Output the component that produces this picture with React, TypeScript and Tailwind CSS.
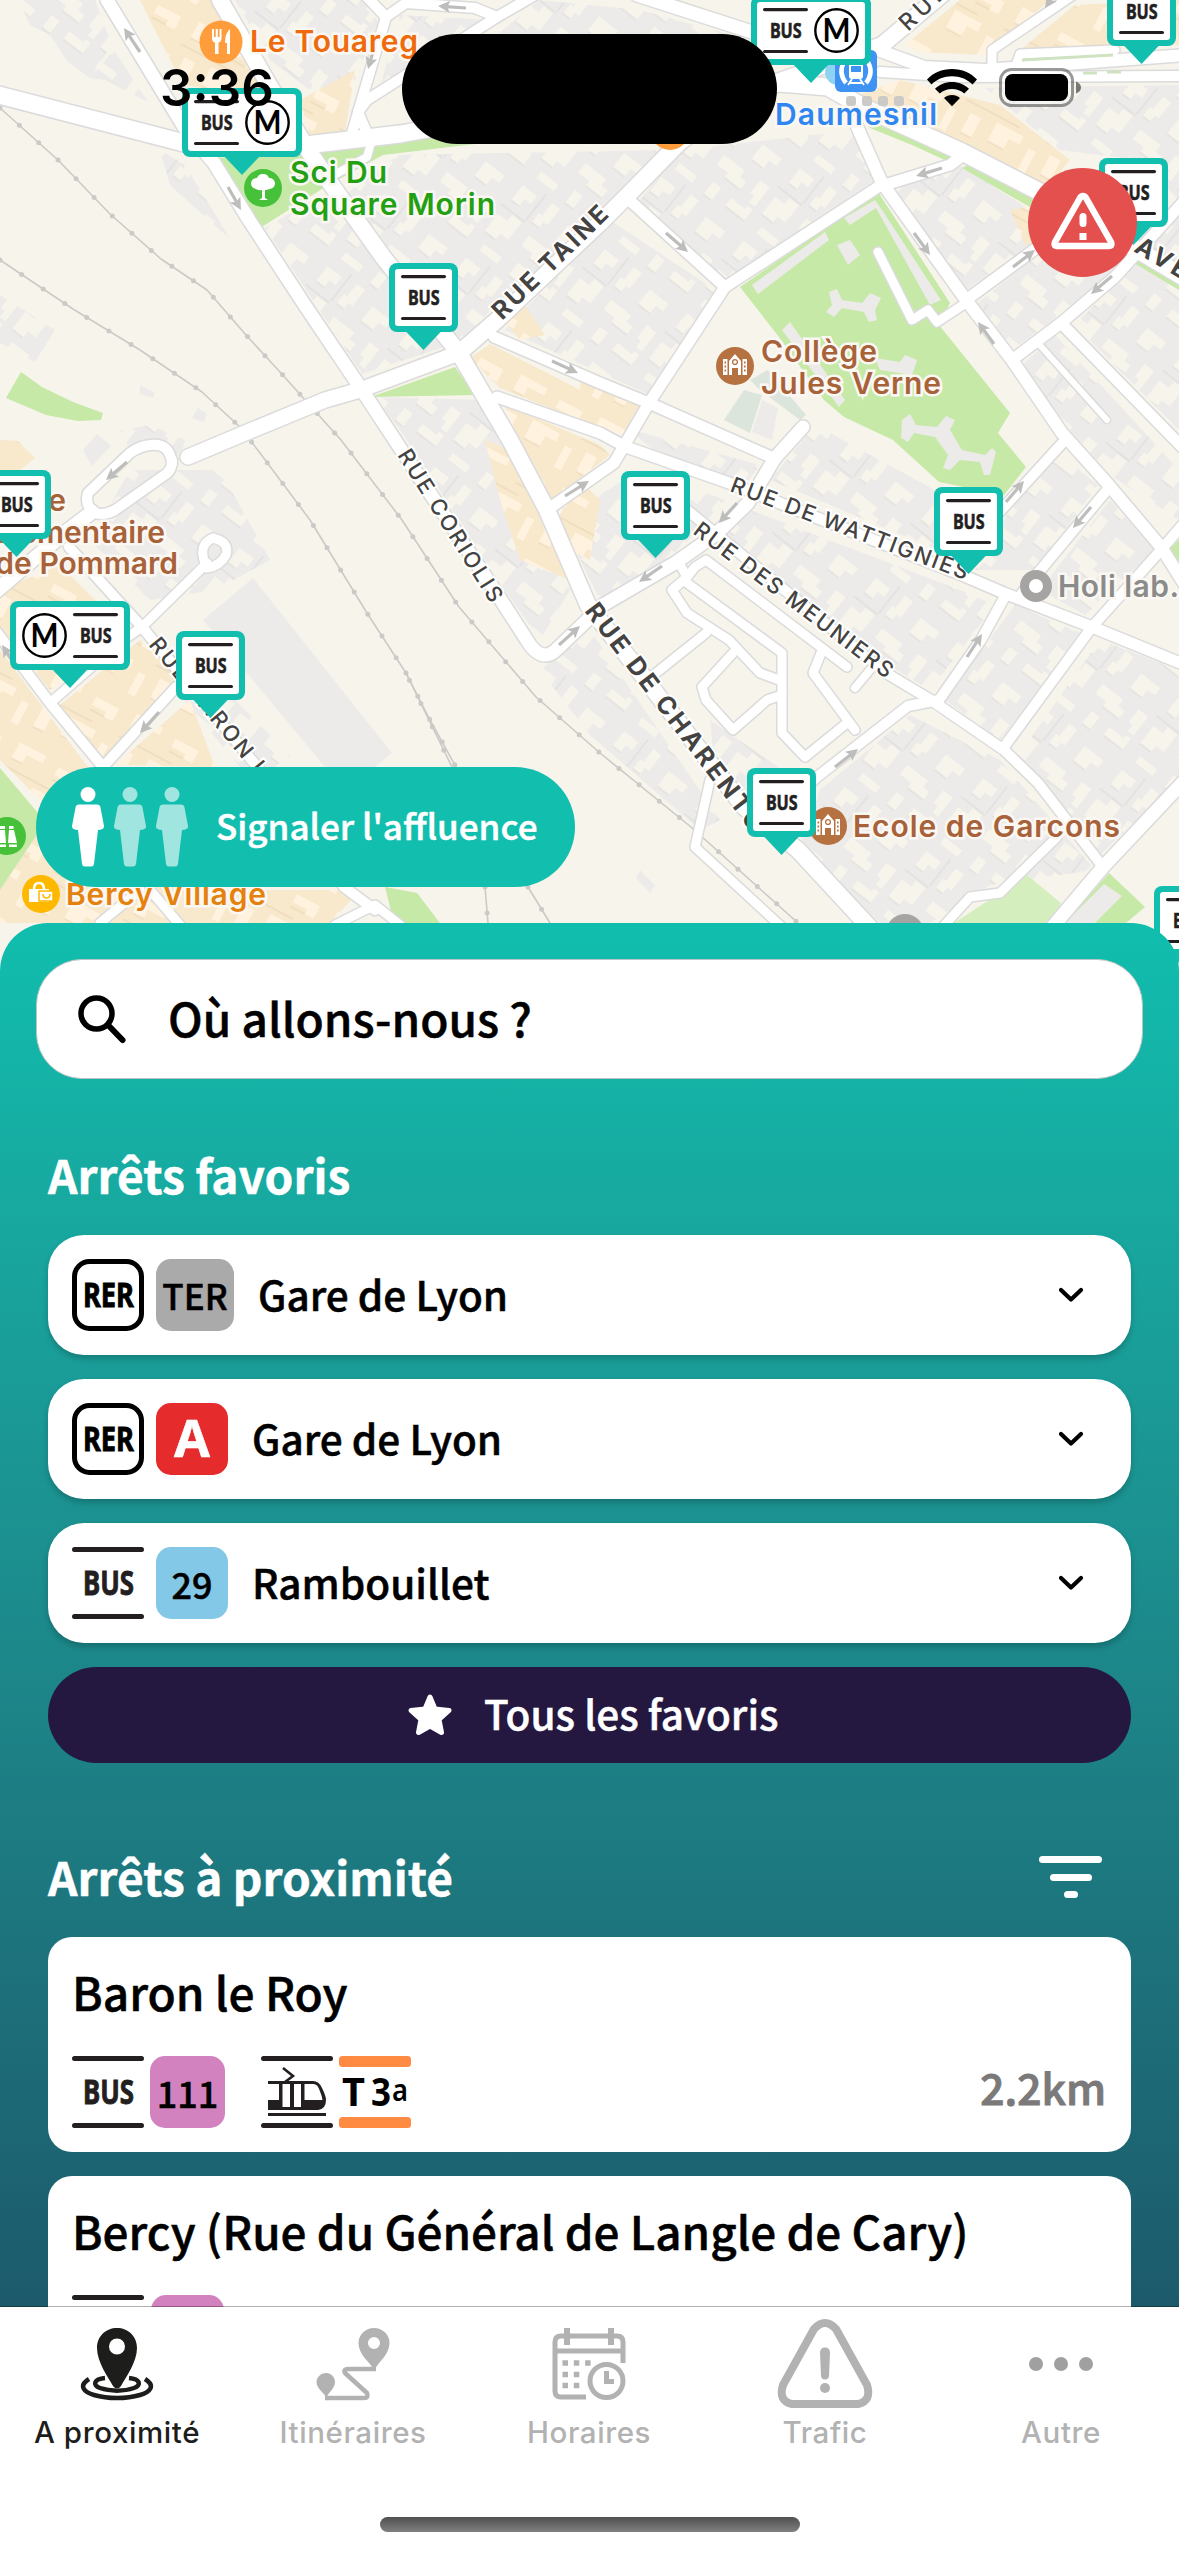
import React from "react";

const CJK = "font-['Noto_Sans_CJK_JP','Noto_Sans_CJK_SC',sans-serif] [-webkit-text-stroke:0.5px]";

/* ---------- Map ---------- */

const GREENS = [
  "740,287 878,192 950,303 939,325 1010,413 998,433 1026,467 1004,495 939,482 893,440 844,417 824,400 779,337",
  "218,158 306,150 440,137 475,144 383,155 325,187 260,228",
  "371,397 455,367 475,395",
  "21,372 42,387 73,402 103,413 101,420 78,421 46,415 6,398",
  "863,120 905,130 958,153 947,161 912,145 870,128",
  "962,168 977,160 1035,190 1035,210",
  "1134,263 1141,253 1179,273 1179,290",
  "1109,873 1145,907 1126,923 1065,923",
  "1179,540 1168,550 1179,572",
  "0,768 38,813 40,830 0,890",
  "385,887 417,893 440,923 394,923",
];

const BLOCKS = [
  "18,0 95,0 112,45 90,78 68,62 50,35 30,25",
  "90,78 114,50 148,102 120,88 105,80",
  "235,0 365,0 378,22 355,80 310,90 270,60",
  "400,15 490,20 378,95",
  "398,155 660,150 600,215 490,310 465,345 345,195",
  "265,228 330,190 450,345 362,374",
  "640,200 680,150 855,130 875,180 725,280",
  "610,220 715,290 650,395 505,330",
  "895,190 960,165 1030,210 1040,240 965,290",
  "975,305 1050,245 1115,270 1060,315 1012,350",
  "1075,325 1179,215 1179,430",
  "1022,365 1055,335 1179,470 1179,520 1110,475 1070,430",
  "375,397 485,400 540,510 570,590 540,640 505,590 400,430",
  "560,520 640,470 725,500 675,555 600,600",
  "632,430 760,465 745,485 650,450",
  "780,468 815,425 935,490 950,555 770,480",
  "750,510 960,590 995,605 930,690 880,660 720,540",
  "1010,510 1060,455 1098,485 1035,570 975,570",
  "1110,500 1155,550 1085,615 1040,590",
  "1015,605 1085,635 1000,740 945,700",
  "1100,640 1179,670 1179,780 1100,855 1015,760",
  "820,790 910,715 1000,760 1095,870 990,885 930,923 880,923 800,845",
  "540,670 590,630 720,820 700,830 590,735",
  "710,720 790,775 750,800 715,770",
  "130,470 220,470 270,560 215,590 150,600 90,540",
  "0,295 55,330 35,362 0,343",
  "540,0 640,10 750,40 750,80 600,80 420,100 505,28",
  "985,88 1179,85 1179,200 1140,160 1060,150",
  "160,150 185,165 240,255 225,235 170,185",
  "120,430 150,425 185,440 180,460 130,450",
  "176,690 200,665 290,755 275,767 240,767",
];

const SOLID = [
  "253,578 392,753 375,767 325,767 203,620",
  "83,450 97,434 111,446 92,466",
  "198,408 207,414 204,422 192,418",
  "140,385 155,393 153,398 140,394",
  "640,870 655,885 650,893 636,878",
];

const SHOPS = [
  "140,0 215,0 265,90 240,95 185,85 170,60",
  "300,100 355,70 345,132 310,137",
  "470,358 490,344 600,400 640,418 615,434 500,388",
  "505,405 600,445 610,455 552,500 520,445",
  "500,315 525,305 545,335 520,340",
  "905,45 960,0 1050,0 985,55 920,52",
  "1075,5 1179,0 1179,45 1020,50",
  "860,95 900,80 1000,105 1070,160 1045,190 960,145",
  "1010,210 1035,205 1045,240 1025,245",
  "485,440 510,450 545,530 570,580 520,560 500,500",
  "580,480 600,500 590,560 560,545 560,515",
  "0,590 60,565 130,635 50,690 0,630",
  "60,705 140,640 180,680 105,760",
  "0,650 90,770 50,810 0,760",
  "115,765 190,700 215,767",
  "40,830 60,820 200,890 360,890 330,923 0,923 0,890",
  "0,440 18,441 35,458 20,470 0,470",
  "580,370 640,405 625,435 580,415",
];

const PARK_BUILDINGS = [
  "844,218 875,200 882,210 941,300 930,305 876,208 850,225",
  "752,285 825,232 829,240 758,294",
  "837,245 850,240 860,255 848,265",
  "829,292 837,289 842,300 862,303 870,293 881,298 875,310 877,320 869,322 864,312 842,308 834,317 826,312 832,305",
  "782,330 790,322 845,400 839,407",
  "875,358 900,362 905,355 917,360 912,375 880,370",
  "902,420 910,414 916,425 937,427 946,416 955,420 950,430 962,450 985,455 992,448 996,452 990,475 984,475 980,462 960,460 950,470 943,468 948,455 935,437 914,433 908,442 901,438",
];

const ROADS: [string, number][] = [
  ["M107,0 L184,127 L214,163 L249,220 L306,307 L360,387 L406,457 L501,600 L530,645 Q543,662 556,650 L603,605 L675,563 L715,535 L748,503 L775,458 L803,427", 13],
  ["M-5,94 L184,143 L306,145 L400,134 L560,105 L780,83 L828,87 L865,108 L962,152 L1040,192 L1185,278", 17],
  ["M220,0 L268,83 L306,147 L333,187 L383,257 L459,353 L510,440 L547,510 L588,605 L744,807 L798,850 L872,930", 16],
  ["M459,353 L497,320 L600,223 L626,197 L679,143 L740,95 L882,45 L945,-8", 16],
  ["M855,122 L882,183 L966,300 L1012,360 L1062,433 L1107,483 L1161,547 L1185,585", 12],
  ["M188,457 L245,433 L325,400 L360,390 L459,353", 15],
  ["M172,464 Q170,442 150,445 Q140,446 130,453 L88,493 Q84,505 95,513 Q104,516 115,510 L166,474 Q172,470 172,460", 10],
  ["M92,512 L62,535 L-5,592", 14],
  ["M69,547 L142,627 L264,775 L344,887 L375,910", 10],
  ["M50,703 L119,643 L142,627 L207,563 M207,568 Q196,545 213,538 Q230,542 226,555 Q220,566 207,568", 9],
  ["M-5,630 L50,703 L103,767 L176,687", 10],
  ["M497,397 L600,433 L626,447 L729,483 L962,575 L1004,593 L1092,627 L1185,665", 11],
  ["M494,337 L600,383 L649,403 L771,457", 11],
  ["M626,197 L725,287 L649,403 L614,463 L547,510", 11],
  ["M725,287 L878,187 L950,165 L966,153", 11],
  ["M966,300 L1038,247 L1060,225", 11],
  ["M1012,360 L1061,323 L1115,277 L1185,200", 11],
  ["M1061,323 L1185,450", 11],
  ["M1038,343 L1107,420", 6],
  ["M878,252 L912,320 L928,310 L937,322 L966,303", 9],
  ["M1065,440 L1004,507 L950,565", 10],
  ["M1107,490 L1038,573 L1022,593", 10],
  ["M1185,522 L1161,550 L1092,627 L1004,747", 10],
  ["M1004,598 L981,640 L939,700 L908,706 L817,777 L760,830", 10],
  ["M687,510 L886,673 L931,700 L1004,750 L1038,783 L1103,867", 10],
  ["M1185,780 L1103,867 L1050,930", 13],
  ["M1057,837 L1000,893 L970,897 L940,930", 9],
  ["M679,563 L687,577 L672,590 L687,613 L729,640 L760,673 L779,680", 9],
  ["M706,633 L656,673", 9],
  ["M687,577 L695,567 L706,560 L847,667", 9],
  ["M687,583 L782,653 L782,733 L805,757 L847,723", 9],
  ["M821,653 L813,673 L855,730", 9],
  ["M733,653 L702,687 L706,700 L733,730 L767,700 L782,695", 9],
  ["M870,670 L855,688", 8],
  ["M710,780 L695,847 L785,930", 9],
  ["M637,-5 L752,32", 13],
  ["M878,50 L924,67 L985,70 L1185,55", 12],
  ["M880,72 L960,77 L1185,76", 10],
  ["M992,65 L992,50 L1073,-5", 9],
  ["M1015,68 L1020,54 L1115,50", 9],
  ["M365,-5 L386,17 L406,3 L475,8 L497,17 L535,-5", 10],
  ["M386,17 L352,133", 10],
  ["M497,17 L367,100 L358,112 L367,133", 10],
  ["M371,143 L367,157 L325,180", 8],
  ["M100,923 L140,890 M150,890 L180,925 M335,925 L375,905 M375,905 L400,925", 9],
];

const RAILS = [
  "M0,108 L58,160 L110,214 L161,259 L207,290 L246,335 L280,372 L341,440 L402,520 L459,607 L536,697 L600,753 L691,827 L798,923",
  "M0,260 L73,309 L140,350 L202,392 L240,427 L260,453 L310,520 L367,613 L406,673 L452,767",
  "M406,673 L430,720 L456,767",
  "M485,887 L488,923 M528,887 L550,923",
];

const ARROWS = [
  [140, 52, 124, 28], [466, 8, 438, 6], [375, 45, 368, 69], [228, 187, 241, 210], [552, 361, 578, 373],
  [666, 233, 688, 252], [942, 168, 916, 176], [914, 233, 930, 255], [1013, 267, 1035, 250], [1112, 276, 1091, 294],
  [994, 344, 978, 322], [1056, -8, 1045, 8], [127, 462, 106, 480], [565, 496, 589, 481], [559, 645, 580, 626],
  [159, 712, 140, 733], [12, 660, 2, 645], [737, 503, 719, 523], [662, 566, 639, 582], [1006, 502, 1024, 481],
  [1091, 507, 1073, 528], [967, 657, 982, 634], [835, 767, 858, 749],
];

function Street({ x1, y1, x2, y2, size, bold, children }: { x1: number; y1: number; x2: number; y2: number; size: number; bold?: boolean; children: string }) {
  const len = Math.hypot(x2 - x1, y2 - y1);
  const a = (Math.atan2(y2 - y1, x2 - x1) * 180) / Math.PI;
  return (
    <text
      transform={`translate(${x1} ${y1}) rotate(${a})`}
      fontSize={size}
      fontWeight={bold ? 700 : 500}
      fill="#444341"
      stroke="#fff"
      strokeWidth={4}
      paintOrder="stroke"
      textLength={len}
    >
      {children}
    </text>
  );
}

function Place({ x, y, color, w, end, children }: { x: number; y: number; color: string; w?: number; end?: boolean; children: string }) {
  return (
    <text x={x} y={y} fontSize={30} fontWeight={600} fill={color} stroke="#fbf8f3" strokeWidth={5} paintOrder="stroke" textLength={w} textAnchor={end ? "end" : "start"}>
      {children}
    </text>
  );
}

function BusGlyph({ x, y, s = 1 }: { x: number; y: number; s?: number }) {
  return (
    <g transform={`translate(${x} ${y}) scale(${s})`} fill="#231f20">
      <rect width="72" height="5" rx="2.5" />
      <rect y="67" width="72" height="5" rx="2.5" />
      <text x="11" y="48" fontFamily="Noto Sans" fontWeight="700" fontSize="34" stroke="#231f20" strokeWidth="0.9" textLength="51" lengthAdjust="spacingAndGlyphs">BUS</text>
    </g>
  );
}

function MetroGlyph({ cx, cy }: { cx: number; cy: number }) {
  return (
    <g>
      <circle cx={cx} cy={cy} r="21.2" fill="#fff" stroke="#000" strokeWidth="2.4" />
      <text x={cx - 14} y={cy + 11.5} fontFamily="Lato" fontWeight="700" fontSize="32" textLength="28" lengthAdjust="spacingAndGlyphs">M</text>
    </g>
  );
}

function Marker({ x, y, kind = "bus" }: { x: number; y: number; kind?: "bus" | "busMetro" | "metroBus" }) {
  const w = kind === "bus" ? 69 : 120;
  return (
    <g transform={`translate(${x} ${y})`}>
      <path d={`M${w / 2 - 19},67 H${w / 2 + 19} L${w / 2},87 Z`} fill="#12beae" />
      <rect width={w} height="69" rx="8" fill="#12beae" />
      <rect x="6" y="6" width={w - 12} height="57" rx="3" fill="#fff" />
      {kind === "bus" && <BusGlyph x={12} y={12} s={0.625} />}
      {kind === "busMetro" && (<><BusGlyph x={12} y={12} s={0.625} /><MetroGlyph cx={85.5} cy={34.5} /></>)}
      {kind === "metroBus" && (<><BusGlyph x={63} y={12} s={0.625} /><MetroGlyph cx={34.5} cy={34.5} /></>)}
    </g>
  );
}

function SchoolIcon({ x, y }: { x: number; y: number }) {
  return (
    <g transform={`translate(${x} ${y})`}>
      <circle r="19" fill="#b5713f" />
      <path d="M-12,-7 H-7.5 V9 H-12 Z M7.5,-7 H12 V9 H7.5 Z M-6,-5 L0,-12 L6,-5 V9 H3 V2 H-3 V9 H-6 Z" fill="#fff" />
      <path d="M-10.500,-3.500 h1.600 M-10.500,0.500 h1.600 M-10.500,4.500 h1.600 M9,-3.500 h1.600 M9,0.500 h1.600 M9,4.500 h1.600" stroke="#b5713f" strokeWidth="2" />
      <circle cy="-4" r="2.4" fill="none" stroke="#b5713f" strokeWidth="1.3" />
    </g>
  );
}

function CityMap() {
  return (
    <svg className="absolute top-0 left-0" width="1179" height="980" viewBox="0 0 1179 980" fontFamily="Inter, sans-serif">
      <defs>
        <pattern id="yards" width="104" height="92" patternUnits="userSpaceOnUse" patternTransform="rotate(38)">
          <rect width="104" height="92" fill="#ecebe9" />
          <path d="M6,8 h18 v10 h-8 v9 h-10z M40,4 h10 v20 h-5 v8 h-9 v-12 h4z M66,12 h24 v9 h-9 v10 h-15z M4,46 h12 v-8 h12 v22 h-10 v8 h-14z M42,44 h26 v8 h8 v10 h-20 v-6 h-14z M86,42 h12 v24 h-7 v-8 h-5z M12,78 h22 v8 h-22z M50,72 h10 v16 h-10z M74,74 h18 v-4 h6 v14 h-24z" fill="#f7f4ec" />
          <path d="M6,27 h10 M36,32 h9 M66,31 h15 M4,68 h14 M56,62 h20 M74,84 h24 M50,88 h10 M30,0 v34 M0,36 h30" stroke="#d9d8d6" strokeWidth="0.9" fill="none" />
        </pattern>
        <pattern id="shops" width="90" height="80" patternUnits="userSpaceOnUse" patternTransform="rotate(28)">
          <rect width="90" height="80" fill="#f8e8cc" />
          <path d="M6,6 h30 v8 h-18 v10 h-12z M52,10 h26 v14 h-10 v-5 h-16z M10,44 h12 v22 h-12z M38,40 h30 v9 h-12 v12 h-18z M78,48 h8 v24 h-8z" fill="#fff2df" />
          <path d="M6,24 h12 M52,24 h16 M38,61 h18 M10,66 h12 M0,34 h60" stroke="#e6d3b2" strokeWidth="0.9" fill="none" />
        </pattern>
      </defs>
      <rect width="1179" height="980" fill="#f7f4ec" />
      {BLOCKS.map((p) => <polygon key={p} points={p} fill="url(#yards)" />)}
      {SOLID.map((p) => <polygon key={p} points={p} fill="#ecebe9" />)}
      {SHOPS.map((p) => <polygon key={p} points={p} fill="url(#shops)" />)}
      <polygon points="744,390 762,395 750,433 724,420" fill="#dce5dc" />
      <polygon points="762,400 778,408 772,440 752,432" fill="#ecebe9" />
      <polygon points="750,380 768,370 806,415 800,420 760,390" fill="#dce5dc" />
      {GREENS.map((p) => <polygon key={p} points={p} fill="#c6e9a7" />)}
      <polygon points="954,923 1027,875 1061,903 1050,923" fill="#d4efbd" />
      <polygon points="1065,923 1104,884 1122,896 1095,923" fill="#ecebe9" />
      {PARK_BUILDINGS.map((p) => <polygon key={p} points={p} fill="#ecebe9" />)}
      {RAILS.map((d) => (
        <g key={d} fill="none" stroke="#cbcac7" strokeLinejoin="round">
          <path d={d} strokeWidth="1.6" />
          <path d={d} strokeWidth="5" strokeLinecap="round" strokeDasharray="0 26" />
        </g>
      ))}
      <g fill="none" stroke="#dadbda" strokeLinejoin="round" strokeLinecap="round">
        {ROADS.map(([d, w]) => <path key={d} d={d} strokeWidth={w + 3} />)}
      </g>
      <g fill="none" stroke="#fff" strokeLinejoin="round" strokeLinecap="round">
        {ROADS.map(([d, w]) => <path key={d} d={d} strokeWidth={w} />)}
      </g>
      <path d="M1022,60 L1113,55 M1083,73 H1097 M1107,72 H1121" stroke="#cfe3c2" strokeWidth="3" />
      {ARROWS.map(([a, b, c, d]) => {
        const l = Math.hypot(c - a, d - b);
        return (
          <g key={`${a}-${b}`} transform={`translate(${a} ${b}) rotate(${(Math.atan2(d - b, c - a) * 180) / Math.PI})`}>
            <path d={`M0,0 H${l - 8}`} stroke="#bdbdbc" strokeWidth="3.2" />
            <path d={`M${l},0 l-12,-6 l2.500,6 l-2.500,6z`} fill="#bdbdbc" />
          </g>
        );
      })}

      <Street x1={502} y1={321} x2={610} y2={216} size={25} bold>RUE TAINE</Street>
      <Street x1={397} y1={455} x2={491} y2={604} size={22}>RUE CORIOLIS</Street>
      <Street x1={584} y1={611} x2={752} y2={833} size={25} bold>RUE DE CHARENTO</Street>
      <Street x1={729} y1={491} x2={965} y2={580} size={22}>RUE DE WATTIGNIES</Street>
      <Street x1={692} y1={533} x2={886} y2={679} size={22}>RUE DES MEUNIERS</Street>
      <Street x1={148} y1={645} x2={258} y2={778} size={22}>RUE BARON L</Street>
      <Street x1={908} y1={32} x2={948} y2={-6} size={23}>RUE</Street>
      <Street x1={1133} y1={251} x2={1182} y2={280} size={25} bold>AVE</Street>

      <Place x={250} y={52} color="#ee6a0c" w={168}>Le Touareg</Place>
      <Place x={290} y={183} color="#22a012" w={97}>Sci Du</Place>
      <Place x={290} y={215} color="#22a012" w={205}>Square Morin</Place>
      <Place x={761} y={362} color="#a8623a" w={116}>Collège</Place>
      <Place x={761} y={394} color="#a8623a" w={180}>Jules Verne</Place>
      <Place x={853} y={837} color="#a8623a" w={267}>Ecole de Garcons</Place>
      <Place x={1058} y={597} color="#8b8b8a" w={121}>Holi lab.</Place>
      <Place x={66} y={905} color="#e5820e" w={200}>Bercy Village</Place>
      <Place x={66} y={511} color="#a8623a" end>Ecole</Place>
      <Place x={165} y={543} color="#a8623a" end>élémentaire</Place>
      <Place x={178} y={574} color="#a8623a" end>de Pommard</Place>

      <circle cx="221" cy="42" r="21.500" fill="#ff9c3b" />
      <path d="M212,29 v9 q0,4 3,4.500 V54 h3.500 V42.500 q3,-.5 3,-4.500 V29 h-2 v8 h-1.700 v-8 h-2.100 v8 h-1.700 v-8z M230,29 q-5,4 -5,14 h2 v11 h3z" fill="#fff" />
      <circle cx="670" cy="131" r="19" fill="#ff9c3b" />
      <circle cx="263" cy="188" r="19" fill="#48c13a" />
      <path d="M263,174 a6,6 0 0 1 6,4 a5.500,5.500 0 0 1 1,11 q-3,1 -5,1 V198 l3,2 h-9 l3,-2 V190 q-3,1 -6,-1 a5.500,5.500 0 0 1 1,-11 a6,6 0 0 1 6,-4z" fill="#fff" />
      <circle cx="7" cy="836" r="19" fill="#48c13a" />
      <path d="M0,826 h5 v3 h-5z M9,826 h4.500 v3 h-4.500z M-2,843 l2,-13 h5 l1,13z M8,843 l1,-13 h5 l3,13z M-2,844.500 h8 v2.500 h-8z M9,844.500 h8 v2.500 h-8z" fill="#fff" />
      <circle cx="41" cy="894" r="19" fill="#ffb800" />
      <path d="M29,889 h20 v13 h-20z" fill="#fff" />
      <path d="M34,889 q0,-6 5,-6 t5,6" fill="none" stroke="#fff" strokeWidth="2.500" />
      <path d="M39,891 h14 v10 h-14z" fill="#fff" stroke="#ffb800" strokeWidth="1.500" />
      <path d="M43,894 q0,4 3.500,4 t3.500,-4" fill="none" stroke="#ffb800" strokeWidth="1.600" />
      <circle cx="838" cy="72" r="13" fill="#8fd3f2" />
      <rect x="835" y="50" width="42" height="42" rx="6" fill="#3f93f3" />
      <path d="M849,62 h14 v14 q0,3 -3,3 h-8 q-3,0 -3,-3z" fill="#fff" />
      <path d="M851,66 h10 v6 h-10z" fill="#3f93f3" />
      <path d="M852,79 l-4,6 M860,79 l4,6 M850,83 h12" stroke="#fff" strokeWidth="1.800" />
      <path d="M844,62 q-6,11 2,21 M868,62 q6,11 -2,21" fill="none" stroke="#fff" strokeWidth="4.500" />
      <Place x={775} y={125} color="#2f86f0" w={162}>Daumesnil</Place>
      <g fill="#cbcac7">
        <rect x="846" y="96" width="10" height="10" rx="3" />
        <rect x="862" y="96" width="10" height="10" rx="3" />
        <rect x="878" y="96" width="10" height="10" rx="3" />
        <rect x="894" y="96" width="10" height="10" rx="3" />
      </g>
      <SchoolIcon x={735} y={366} />
      <SchoolIcon x={828} y={826} />
      <circle cx="1036" cy="586" r="11.500" fill="#fff" stroke="#a5a4a2" strokeWidth="9" />
      <circle cx="905" cy="933" r="19" fill="#a5a4a2" />

      <Marker x={389} y={263} />
      <Marker x={-18} y={470} />
      <Marker x={621} y={471} />
      <Marker x={934} y={487} />
      <Marker x={176} y={631} />
      <Marker x={747} y={768} />
      <Marker x={1107} y={-23} />
      <Marker x={1099} y={158} />
      <Marker x={1154} y={886} />
      <Marker x={182} y={88} kind="busMetro" />
      <Marker x={751} y={-4} kind="busMetro" />
      <Marker x={10} y={601} kind="metroBus" />
    </svg>
  );
}

/* ---------- Overlays ---------- */

function StatusBar() {
  return (
    <div className="absolute top-0 left-0 h-[144px] w-[1179px]">
      <div className="absolute top-[58px] left-[160px] font-['Inter'] text-[51px] leading-[60px] font-semibold text-black">3:36</div>
      <div className="absolute top-[34px] left-[402px] h-[110px] w-[375px] rounded-full bg-black" />
      <svg className="absolute top-[68px] left-[926px]" width="52" height="39" viewBox="0 0 52 39">
        <path d="M26,1 C36,1 45,5 51,11.500 L46.500,16.500 C41,11.200 34,8.300 26,8.300 C18,8.300 11,11.200 5.500,16.500 L1,11.500 C7,5 16,1 26,1Z M26,14 C32.500,14 38.500,16.500 43,20.800 L38.200,25.500 C35,22.600 30.800,21 26,21 C21.200,21 17,22.600 13.800,25.500 L9,20.800 C13.500,16.500 19.500,14 26,14Z M26,27 C29,27 31.800,28 34,30 L26,38.300 L18,30 C20.200,28 23,27 26,27Z" />
      </svg>
      <svg className="absolute top-[67px] left-[998px]" width="84" height="42" viewBox="0 0 84 42">
        <rect x="2.500" y="2.500" width="72" height="36" rx="11" fill="#fff" fillOpacity=".4" stroke="#000" strokeOpacity=".4" strokeWidth="3" />
        <rect x="7" y="7" width="63" height="27" rx="7.500" />
        <path d="M78,14.500 q5,2 5,6 t-5,6z" fillOpacity=".5" />
      </svg>
    </div>
  );
}

function Person({ opacity }: { opacity: number }) {
  return (
    <svg width="32" height="80" viewBox="0 0 32 80" fill="#fff" fillOpacity={opacity}>
      <circle cx="16" cy="7.500" r="7.500" />
      <path d="M7,17.500 h18 q3,0 3.500,3 L32,39 q.5,3.500 -6,4 L22,77 q-.4,2.500 -3,2.500 h-6 q-2.600,0 -3,-2.500 L6,43 q-6.500,-.5 -6,-4 L3.500,20.500 q.5,-3 3.500,-3z" />
    </svg>
  );
}

/* ---------- Sheet ---------- */

function RerBadge() {
  return (
    <svg width="72" height="72" viewBox="0 0 72 72">
      <rect x="2.500" y="2.500" width="67" height="67" rx="15" fill="#fff" stroke="#000" strokeWidth="5" />
      <text x="11" y="48" fontFamily="Noto Sans" fontWeight="700" fontSize="34" stroke="#000" strokeWidth="0.9" textLength="51" lengthAdjust="spacingAndGlyphs">RER</text>
    </svg>
  );
}

function BusBadge() {
  return (
    <svg width="72" height="72" viewBox="0 0 72 72">
      <BusGlyph x={0} y={0} />
    </svg>
  );
}

function TramBadge() {
  return (
    <svg width="72" height="72" viewBox="0 0 72 72" fill="#231f20">
      <rect width="72" height="5" rx="2.500" />
      <rect y="67" width="72" height="5" rx="2.500" />
      <path d="M22,12 L32,20 L24,26" fill="none" stroke="#231f20" strokeWidth="2.600" />
      <path d="M7,25 H52 Q58,25 61,32 Q65,40 65,44 Q65,53 57,54 H7 V44 H18 V28 H7z" />
      <path d="M21.500,28 h7.500 v23 h-7.500z M33,28 h7 v23 h-7z M43.500,28 h9 q4,0 6,6 q2.500,6 3,10 H43.500z" fill="#fff" />
      <rect x="7" y="57" width="58" height="3" />
    </svg>
  );
}

function T3aBadge() {
  return (
    <svg width="72" height="72" viewBox="0 0 72 72">
      <rect width="72" height="11" rx="3.500" fill="#ff8a42" />
      <rect y="61" width="72" height="11" rx="3.500" fill="#ff8a42" />
      <g fontFamily="Noto Sans" fontWeight="700">
        <text x="3" y="50" fontSize="39" textLength="23" lengthAdjust="spacingAndGlyphs">T</text>
        <text x="32" y="50" fontSize="39" textLength="20" lengthAdjust="spacingAndGlyphs">3</text>
        <text x="53" y="45" fontSize="30" fontWeight="600" textLength="16" lengthAdjust="spacingAndGlyphs">a</text>
      </g>
    </svg>
  );
}

function FavoriteRow({ badges, name }: { badges: React.ReactNode; name: string }) {
  return (
    <div className="flex h-[120px] items-center rounded-[36px] bg-white pr-[47px] pl-6 shadow-[0_4px_6px_rgba(0,0,0,0.2)]">
      <div className="flex gap-3">{badges}</div>
      <div className="-mt-[3px] ml-6 flex-1 text-[40.5px] leading-[60px] font-medium text-black">{name}</div>
      <svg width="26" height="16" viewBox="0 0 26 16">
        <path d="M3,3 L13,12.500 L23,3" fill="none" stroke="#000" strokeWidth="4.200" strokeLinecap="round" strokeLinejoin="round" />
      </svg>
    </div>
  );
}

function LineBadge({ className, children }: { className: string; children: string }) {
  return <div className={"flex h-[72px] items-center justify-center rounded-[15px] font-medium text-black " + className}>{children}</div>;
}

function Tab({ label, active, children }: { label: string; active?: boolean; children: React.ReactNode }) {
  return (
    <div className={"flex flex-1 flex-col items-center " + (active ? "text-[#1d1d1b]" : "text-[#b2b2b2]")}>
      <div className="flex h-[114px] items-center justify-center">{children}</div>
      <div className="-mt-[7px] font-['Inter'] text-[29.5px] leading-[36px] font-medium tracking-[0.6px]">{label}</div>
    </div>
  );
}

export default function App() {
  return (
    <div className="relative flex h-[2556px] w-[1179px] flex-col overflow-hidden bg-white">
      <CityMap />
      <StatusBar />
      <div className="absolute top-[168px] left-[1028px] flex h-[109px] w-[109px] items-center justify-center rounded-full bg-[#e4504e]">
        <svg width="66" height="60" viewBox="0 0 66 60" className="-mt-1">
          <path d="M33,5 Q35,5 36,7 L61,51 Q62.500,55 59,55 H7 Q3.500,55 5,51 L30,7 Q31,5 33,5Z" fill="none" stroke="#fff" strokeWidth="6.500" strokeLinejoin="round" />
          <rect x="29.500" y="22" width="7" height="14" rx="3.500" fill="#fff" />
          <rect x="29.500" y="42" width="7" height="7" fill="#fff" />
        </svg>
      </div>

      <div className={"absolute top-[767px] left-[36px] flex h-[120px] w-[539px] items-center rounded-full bg-[#12beae] pl-9 " + CJK}>
        <div className="flex gap-[10px]">
          <Person opacity={1} />
          <Person opacity={0.6} />
          <Person opacity={0.6} />
        </div>
        <div className="-mt-1 ml-7 text-[35px] leading-[60px] font-medium whitespace-nowrap text-white">Signaler l'affluence</div>
      </div>

      <main className={"relative mt-[923px] h-[1384px] shrink-0 overflow-hidden rounded-t-[48px] bg-linear-to-b from-[#10beae] to-[#1c5a6b] " + CJK}>
        <div className="mx-[36px] mt-[36px] flex h-[120px] items-center rounded-[46px] border border-[#b9c4c3] bg-white pl-[40px]">
          <svg width="52" height="52" viewBox="0 0 52 52" fill="none" stroke="#000" strokeLinecap="round" className="mt-[2px]">
            <circle cx="19.500" cy="19.500" r="15.500" strokeWidth="5.500" />
            <path d="M32,32 L45.500,46" strokeWidth="6" />
          </svg>
          <div className="-mt-[4px] ml-[39px] text-[46px] leading-[60px] font-medium text-black">Où allons-nous ?</div>
        </div>

        <section className="mx-[48px] mt-[62px]">
          <h2 className="h-[94px] text-[46px] leading-[66px] font-bold text-white">Arrêts favoris</h2>
          <div className="flex flex-col gap-6">
            <FavoriteRow name="Gare de Lyon" badges={<><RerBadge /><LineBadge className="w-[78px] bg-[#aaaaaa] text-[35px]">TER</LineBadge></>} />
            <FavoriteRow name="Gare de Lyon" badges={<><RerBadge /><LineBadge className="w-[72px] bg-[#e52b2b] pb-1 font-['Noto_Sans'] text-[52px] !font-bold !text-white">A</LineBadge></>} />
            <FavoriteRow name="Rambouillet" badges={<><BusBadge /><LineBadge className="w-[72px] bg-[#84c8e7] text-[36px]">29</LineBadge></>} />
            <div className="flex h-[96px] items-center rounded-full bg-[#251840] pl-[359px] text-white">
              <svg width="46" height="44" viewBox="0 0 46 44" fill="#fff" stroke="#fff" strokeWidth="5" strokeLinejoin="round">
                <path d="M23,4 L28,16 L42,17.500 L32,26.500 L34.500,39.500 L23,33 L11.500,39.500 L14,26.500 L4,17.500 L18,16z" />
              </svg>
              <span className="-mt-1 ml-[31px] text-[40.5px] leading-[60px] font-medium">Tous les favoris</span>
            </div>
          </div>
        </section>

        <section className="mx-[48px] mt-[80px]">
          <div className="flex h-[94px] items-start justify-between pr-[29px]">
            <h2 className="text-[46px] leading-[66px] font-bold text-white">Arrêts à proximité</h2>
            <div className="mt-[13px] flex flex-col items-center gap-[10.5px]">
              <div className="h-[7px] w-[63px] rounded-full bg-white" />
              <div className="h-[7px] w-[42px] rounded-full bg-white" />
              <div className="h-[7px] w-[14px] rounded-full bg-white" />
            </div>
          </div>
          <div className="flex flex-col gap-6">
            <div className="h-[215px] rounded-[24px] bg-white pt-[21px] pr-[25px] pl-6">
              <div className="text-[46px] leading-[66px] font-medium text-black">Baron le Roy</div>
              <div className="mt-[32px] flex">
                <BusBadge />
                <LineBadge className="ml-1.5 w-[75px] bg-[#d282bf] text-[36px]">111</LineBadge>
                <div className="ml-9"><TramBadge /></div>
                <div className="ml-1.5"><T3aBadge /></div>
                <div className="-mt-[2px] ml-auto text-[42.5px] leading-[66px] font-medium text-[#7b7979] [-webkit-text-stroke:1px]">2.2km</div>
              </div>
            </div>
            <div className="h-[215px] rounded-[24px] bg-white pt-[21px] pr-[25px] pl-6">
              <div className="text-[45.8px] leading-[66px] font-medium whitespace-nowrap text-black">Bercy (Rue du Général de Langle de Cary)</div>
              <div className="mt-[32px] flex">
                <BusBadge />
                <div className="ml-[7px] h-[72px] w-[73px] rounded-[15px] bg-[#d282bf]" />
              </div>
            </div>
          </div>
        </section>
        <div className="absolute inset-x-0 bottom-0 h-px bg-black/30" />
      </main>

      <nav className="relative -ml-px flex h-[210px] shrink-0 bg-white">
        <Tab label="A proximité" active>
          <svg width="74" height="84" viewBox="0 0 74 84" fill="none" stroke="currentColor">
            <path fillRule="evenodd" stroke="none" fill="currentColor" d="M37,6 C48,6 57,14 57,26 C57,40 46,55 41,64 Q37,69 33,64 C28,55 17,40 17,26 C17,14 26,6 37,6Z M37,16.500 A8,8 0 1 0 37,32.500 A8,8 0 1 0 37,16.500Z" />
            <path strokeWidth="4.500" d="M25,56 C14,57 12,63 20,66 C30,69.500 44,69.500 54,66 C62,63 60,57 49,56" />
            <path strokeWidth="4.500" d="M9,57 C-2,64 4,70 14,73 C28,77 46,77 60,73 C70,70 76,64 65,57" />
          </svg>
        </Tab>
        <Tab label="Itinéraires">
          <svg width="74" height="84" viewBox="0 0 74 84" fill="none" stroke="currentColor">
            <path fillRule="evenodd" stroke="none" fill="currentColor" d="M58,6 C67,6 73.500,13 73.500,21 C73.500,32 63,40 59.500,46 H57 C53,40 42.500,32 42.500,21 C42.500,13 49,6 58,6Z M58,15 A6,6 0 1 0 58,27 A6,6 0 1 0 58,15Z" />
            <path stroke="none" fill="currentColor" d="M10,51 C15,51 19,55 19,60 C19,67 12,70 10.500,76 C8,70 .5,67 .5,60 C.5,55 5,51 10,51Z" />
            <path strokeWidth="4.500" strokeLinejoin="round" d="M60,47 H32 Q27,47 29,51 L51,71 Q53,76 48,76 H9" />
          </svg>
        </Tab>
        <Tab label="Horaires">
          <svg width="74" height="84" viewBox="0 0 74 84" fill="none" stroke="currentColor">
            <path strokeWidth="5" d="M34,75 H9 Q3,75 3,69 V20 Q3,14 9,14 H65 Q71,14 71,20 V41 M3,29 H71" />
            <path strokeWidth="6" d="M15,6 V23 M59,6 V23" />
            <path strokeWidth="5.500" strokeDasharray="5.500 5.800" d="M10.500,41 H43 M10.500,52.500 H28 M10.500,63.500 H28" />
            <circle cx="54.500" cy="59" r="21" fill="#fff" stroke="none" />
            <circle cx="54.500" cy="59" r="16.500" strokeWidth="5" />
            <path strokeWidth="5" d="M54.500,49 V59.500 H62" />
          </svg>
        </Tab>
        <Tab label="Trafic">
          <svg width="98" height="90" viewBox="0 0 98 90" fill="none" stroke="currentColor">
            <path strokeWidth="8" strokeLinejoin="round" d="M38,10 Q49,-2 60,10 L91,66 Q96,82 82,85 H16 Q2,82 7,66Z" />
            <path stroke="none" fill="currentColor" d="M44,34 q0,-5.500 5,-5.500 t5,5.500 l-1,23 q-.5,3.500 -4,3.500 t-4,-3.500z" />
            <circle cx="49" cy="69" r="5" fill="currentColor" stroke="none" />
          </svg>
        </Tab>
        <Tab label="Autre">
          <div className="flex gap-[11px]">
            <div className="size-[14px] rounded-full bg-[#a0a0a0]" />
            <div className="size-[14px] rounded-full bg-[#a0a0a0]" />
            <div className="size-[14px] rounded-full bg-[#a0a0a0]" />
          </div>
        </Tab>
      </nav>
      <div className="mx-auto h-[15px] w-[420px] shrink-0 rounded-full bg-linear-to-b from-[#505050] to-[#808080]" />
    </div>
  );
}
